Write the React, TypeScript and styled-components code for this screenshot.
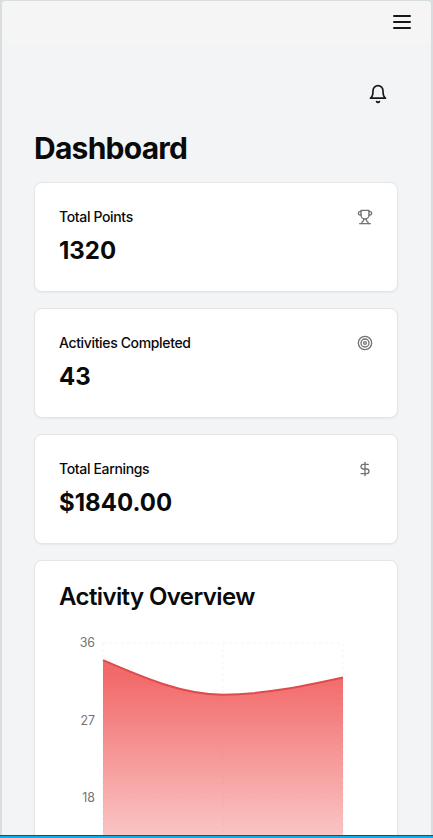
import React from 'react';
import styled, { createGlobalStyle } from 'styled-components';

const GlobalStyle = createGlobalStyle`
  * { box-sizing: border-box; }
  body { margin: 0; font-family: Inter, sans-serif; color: #0a0a0a; background: #f3f4f6; }
  h1, h2, p { margin: 0; }
`;

const Frame = styled.div`
  display: flex;
  flex-direction: column;
  width: 433px;
  height: 838px;
  overflow: hidden;
  background: #d8dedf;
  padding: 1px 2px 0 1.5px;
`;

const Screen = styled.div`
  flex: 1;
  min-height: 0;
  overflow: hidden;
  border-radius: 4px 4px 0 0;
  background: #f3f4f6;
`;

const TopBar = styled.header`
  display: flex;
  justify-content: flex-end;
  align-items: center;
  height: 43px;
  padding: 0 17px 1px 0;
  background: #f5f5f5;
`;

const IconButton = styled.button`
  display: flex;
  padding: 0;
  border: 0;
  background: none;
  color: #171717;
`;

const Content = styled.main`
  padding: 40px 33px 0 32.5px;
`;

const Actions = styled.div`
  display: flex;
  justify-content: flex-end;
  padding-right: 10px;
`;

const PageTitle = styled.h1`
  margin-top: 26px;
  font-size: 30px;
  line-height: 36px;
  font-weight: 700;
  letter-spacing: -0.75px;
`;

const CardList = styled.div`
  display: flex;
  flex-direction: column;
  gap: 16px;
  margin-top: 16px;
`;

const Card = styled.section<{ $height: number }>`
  flex: none;
  height: ${(p) => p.$height}px;
  padding: 24px;
  border: 1px solid #e3e5e7;
  border-radius: 8px;
  background: #fff;
  box-shadow: 0 1px 2px rgba(0, 0, 0, 0.05);
`;

const CardHeader = styled.div`
  display: flex;
  align-items: center;
  justify-content: space-between;
  height: 20px;
  margin-bottom: 8px;
  color: #737373;
`;

const CardLabel = styled.h2`
  font-size: 14px;
  line-height: 20px;
  font-weight: 450;
  letter-spacing: -0.35px;
  color: #0a0a0a;
`;

const CardValue = styled.p`
  font-size: 24px;
  line-height: 32px;
  font-weight: 700;
`;

const ChartTitle = styled.h2`
  font-size: 24px;
  line-height: 24px;
  font-weight: 570;
  letter-spacing: -0.6px;
`;

const ChartSvg = styled.svg`
  display: block;
  margin-top: 24px;
  font-family: Inter, sans-serif;
  font-size: 12.4px;
`;

const Taskbar = styled.footer`
  flex: none;
  height: 3px;
  margin: 0 -2px 0 -1.5px;
  border-top: 1px solid #14566e;
  background: #10ace8;
`;

const Icon = ({ size, children }: { size: number; children: React.ReactNode }) => (
  <svg width={size} height={size} viewBox="0 0 24 24" fill="none" stroke="currentColor"
    strokeWidth={2} strokeLinecap="round" strokeLinejoin="round">
    {children}
  </svg>
);

const stats = [
  {
    label: 'Total Points',
    value: '1320',
    icon: (
      <>
        <path d="M6 9H4.5a2.5 2.5 0 0 1 0-5H6" />
        <path d="M18 9h1.5a2.5 2.5 0 0 0 0-5H18" />
        <path d="M4 22h16" />
        <path d="M10 14.66V17c0 .55-.47.98-.97 1.21C7.85 18.75 7 20.24 7 22" />
        <path d="M14 14.66V17c0 .55.47.98.97 1.21C16.15 18.75 17 20.24 17 22" />
        <path d="M18 2H6v7a6 6 0 0 0 12 0V2Z" />
      </>
    ),
  },
  {
    label: 'Activities Completed',
    value: '43',
    icon: (
      <>
        <circle cx="12" cy="12" r="10" />
        <circle cx="12" cy="12" r="6" />
        <circle cx="12" cy="12" r="2" />
      </>
    ),
  },
  {
    label: 'Total Earnings',
    value: '$1840.00',
    icon: (
      <>
        <line x1="12" x2="12" y1="2" y2="22" />
        <path d="M17 5H9.5a3.5 3.5 0 0 0 0 7h5a3.5 3.5 0 0 1 0 7H6" />
      </>
    ),
  },
];

const curve = 'M44 27.2C84 44.5 124 61.7 164 61.7C204 61.7 244 53.1 284 44.4';
const ticks = [
  { value: 36, y: 10 },
  { value: 27, y: 87.5 },
  { value: 18, y: 165 },
];

const ActivityChart = () => (
  <ChartSvg width="314" height="350" viewBox="0 0 314 350">
    <defs>
      <linearGradient id="activityFill" x1="0" y1="0" x2="0" y2="1">
        <stop offset="5%" stopColor="#ef4444" stopOpacity="0.8" />
        <stop offset="95%" stopColor="#ef4444" stopOpacity="0" />
      </linearGradient>
    </defs>
    <g stroke="#f5f5f5" strokeDasharray="3 3">
      {ticks.map((t) => <line key={t.value} x1="44" x2="284" y1={t.y} y2={t.y} />)}
      {[44, 164, 284].map((x) => <line key={x} x1={x} x2={x} y1="10" y2="320" />)}
    </g>
    <path d={`${curve}V320H44Z`} fill="url(#activityFill)" />
    <path d={curve} fill="none" stroke="#dd4b4d" strokeWidth="2" />
    <g fill="#737373" textAnchor="end">
      {ticks.map((t) => <text key={t.value} x="36" y={t.y + 4.3}>{t.value}</text>)}
    </g>
  </ChartSvg>
);

export default function App() {
  return (
    <>
      <GlobalStyle />
      <Frame>
        <Screen>
          <TopBar>
            <IconButton aria-label="Menu">
              <Icon size={24}><path d="M4 6h16M4 12h16M4 18h16" /></Icon>
            </IconButton>
          </TopBar>
          <Content>
            <Actions>
              <IconButton aria-label="Notifications">
                <Icon size={20}>
                  <path d="M6 8a6 6 0 0 1 12 0c0 7 3 9 3 9H3s3-2 3-9" />
                  <path d="M10.3 21a1.94 1.94 0 0 0 3.4 0" />
                </Icon>
              </IconButton>
            </Actions>
            <PageTitle>Dashboard</PageTitle>
            <CardList>
              {stats.map((s) => (
                <Card key={s.label} $height={110}>
                  <CardHeader>
                    <CardLabel>{s.label}</CardLabel>
                    <Icon size={16}>{s.icon}</Icon>
                  </CardHeader>
                  <CardValue>{s.value}</CardValue>
                </Card>
              ))}
              <Card $height={448}>
                <ChartTitle>Activity Overview</ChartTitle>
                <ActivityChart />
              </Card>
            </CardList>
          </Content>
        </Screen>
        <Taskbar />
      </Frame>
    </>
  );
}
